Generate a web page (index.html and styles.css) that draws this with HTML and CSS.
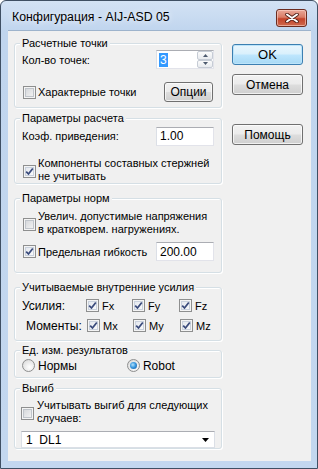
FILE: index.html
```html
<!DOCTYPE html>
<html lang="ru">
<head>
<meta charset="utf-8">
<title>Конфигурация</title>
<link rel="stylesheet" href="styles.css">
</head>
<body>
<div class="window">
  <div class="titlebar">
    <span class="title">Конфигурация - AIJ-ASD 05</span>
    <div class="close">
      <svg width="14" height="10" viewBox="0 0 14 10"><path d="M2 1.5 L12 8.5 M12 1.5 L2 8.5" stroke="#4a1c14" stroke-width="3.6" stroke-linecap="round"/><path d="M2 1.5 L12 8.5 M12 1.5 L2 8.5" stroke="#fff" stroke-width="2" stroke-linecap="round"/></svg>
    </div>
  </div>
  <div class="client">
    <div class="left">
      <div class="group g1">
        <span class="legend">Расчетные точки</span>
        <div class="row r-count">
          <span>Кол-во точек:</span>
          <div class="textbox spin"><span class="sel">3</span>
            <div class="spinbtns">
              <div class="sb"><svg width="5" height="3" viewBox="0 0 5 3"><path d="M0 3 L2.5 0 L5 3Z" fill="#4d5a6e"/></svg></div>
              <div class="sb"><svg width="5" height="3" viewBox="0 0 5 3"><path d="M0 0 L2.5 3 L5 0Z" fill="#4d5a6e"/></svg></div>
            </div>
          </div>
        </div>
        <div class="row r-char">
          <label class="check"><span class="cb"></span><span>Характерные точки</span></label>
          <div class="btn btn-opt">Опции</div>
        </div>
      </div>

      <div class="group g2">
        <span class="legend">Параметры расчета</span>
        <div class="row r-coef">
          <span>Коэф. приведения:</span>
          <div class="textbox tb-num">1.00</div>
        </div>
        <label class="check multi r-comp"><span class="cb on"><svg width="9" height="9" viewBox="0 0 9 9"><path d="M1.2 4.6 L3.5 7 L7.8 1.5" fill="none" stroke="#3a4b7c" stroke-width="1.8"/></svg></span><span>Компоненты составных стержней<br>не учитывать</span></label>
      </div>

      <div class="group g3">
        <span class="legend">Параметры норм</span>
        <label class="check multi r-inc"><span class="cb"></span><span>Увелич. допустимые напряжения<br>в кратковрем. нагружениях.</span></label>
        <div class="row r-flex">
          <label class="check"><span class="cb on"><svg width="9" height="9" viewBox="0 0 9 9"><path d="M1.2 4.6 L3.5 7 L7.8 1.5" fill="none" stroke="#3a4b7c" stroke-width="1.8"/></svg></span><span>Предельная гибкость</span></label>
          <div class="textbox tb-num">200.00</div>
        </div>
      </div>

      <div class="group g4">
        <span class="legend">Учитываемые внутренние усилия</span>
        <div class="forces">
          <span class="fl">Усилия:</span>
          <label class="check"><span class="cb on"><svg width="9" height="9" viewBox="0 0 9 9"><path d="M1.2 4.6 L3.5 7 L7.8 1.5" fill="none" stroke="#3a4b7c" stroke-width="1.8"/></svg></span><span>Fx</span></label>
          <label class="check"><span class="cb on"><svg width="9" height="9" viewBox="0 0 9 9"><path d="M1.2 4.6 L3.5 7 L7.8 1.5" fill="none" stroke="#3a4b7c" stroke-width="1.8"/></svg></span><span>Fy</span></label>
          <label class="check"><span class="cb on"><svg width="9" height="9" viewBox="0 0 9 9"><path d="M1.2 4.6 L3.5 7 L7.8 1.5" fill="none" stroke="#3a4b7c" stroke-width="1.8"/></svg></span><span>Fz</span></label>
          <span class="fl ml">Моменты:</span>
          <label class="check c2"><span class="cb on"><svg width="9" height="9" viewBox="0 0 9 9"><path d="M1.2 4.6 L3.5 7 L7.8 1.5" fill="none" stroke="#3a4b7c" stroke-width="1.8"/></svg></span><span>Mx</span></label>
          <label class="check c2"><span class="cb on"><svg width="9" height="9" viewBox="0 0 9 9"><path d="M1.2 4.6 L3.5 7 L7.8 1.5" fill="none" stroke="#3a4b7c" stroke-width="1.8"/></svg></span><span>My</span></label>
          <label class="check c2"><span class="cb on"><svg width="9" height="9" viewBox="0 0 9 9"><path d="M1.2 4.6 L3.5 7 L7.8 1.5" fill="none" stroke="#3a4b7c" stroke-width="1.8"/></svg></span><span>Mz</span></label>
        </div>
      </div>

      <div class="group g5">
        <span class="legend">Ед. изм. результатов</span>
        <div class="row r-radio">
          <label class="radio"><span class="rb"></span><span>Нормы</span></label>
          <label class="radio r-robot"><span class="rb on"><span class="dot"></span></span><span>Robot</span></label>
        </div>
      </div>

      <div class="group g6">
        <span class="legend">Выгиб</span>
        <label class="check multi r-bend"><span class="cb"></span><span>Учитывать выгиб для следующих<br>случаев:</span></label>
        <div class="combo"><span>1&nbsp;&nbsp;DL1</span><svg width="7" height="4" viewBox="0 0 7 4"><path d="M0 0 L7 0 L3.5 4Z" fill="#000"/></svg></div>
      </div>
    </div>

    <div class="right">
      <div class="btn btn-main default">OK</div>
      <div class="btn btn-main">Отмена</div>
      <div class="btn btn-main help">Помощь</div>
    </div>
  </div>
</div>
</body>
</html>
```

FILE: styles.css
```css
* { box-sizing: border-box; }
html, body { margin: 0; padding: 0; background: #fff; }
body {
  font-family: "Liberation Sans", Arial, sans-serif;
  font-size: 11px;
  color: #000;
}
.window {
  width: 318px;
  height: 469px;
  border: 1px solid #3f4f63;
  border-radius: 6px 6px 0 0;
  background: linear-gradient(180deg, #d3e2f4 0px, #c0d5ee 30px, #c3d7ef 100%);
  padding: 0 6px 7px 7px;
  display: flex;
  flex-direction: column;
}
.titlebar {
  height: 29px;
  display: flex;
  align-items: flex-start;
  justify-content: space-between;
  flex: none;
}
.title {
  font-size: 12.3px;
  margin: 9px 0 0 4px;
  line-height: 15px;
  color: #000;
  text-shadow: 0 0 6px #fff;
}
.close {
  width: 31px;
  height: 18px;
  margin: 8px 4px 0 0;
  border: 1px solid #6b2c20;
  border-radius: 3px;
  background: linear-gradient(180deg, #e9a899 0%, #d97c66 45%, #c3432a 55%, #cf6a4e 100%);
  box-shadow: inset 0 0 0 1px rgba(255,220,210,0.55);
  display: flex;
  align-items: center;
  justify-content: center;
}
.client {
  flex: 1;
  background: #f0f0f0;
  border: 1px solid #9db3cc;
  border-width: 1px 0 0 0;
  display: flex;
}
.left {
  width: 208px;
  margin-left: 6px;
  display: flex;
  flex-direction: column;
}
.right {
  margin-left: 10px;
  padding-top: 13px;
  display: flex;
  flex-direction: column;
}
.group {
  position: relative;
  border: 1px solid #d5dfe5;
  border-radius: 3px;
  box-shadow: inset 1px 1px 0 #fff, 1px 1px 0 #fff;
  padding: 0 7px 0 7px;
  display: flex;
  flex-direction: column;
  flex: none;
}
.legend {
  position: absolute;
  left: 5px;
  top: -8px;
  padding: 0 2px;
  background: #f0f0f0;
  line-height: 14px;
}
.g1 { margin-top: 12px; height: 65px; padding-top: 6px; }
.g2 { margin-top: 10px; height: 66px; padding-top: 7px; }
.g3 { margin-top: 14px; height: 75px; padding-top: 11px; }
.g4 { margin-top: 14px; height: 54px; padding-top: 11px; }
.g5 { margin-top: 9px; height: 28px; padding-top: 8px; }
.g6 { margin-top: 10px; height: 61px; padding-top: 10px; }

.row {
  display: flex;
  align-items: center;
  justify-content: space-between;
}
.r-count { height: 19px; }
.r-char { margin-top: 13px; height: 20px; }
.r-coef { height: 20px; }
.r-flex { margin-top: 7px; height: 19px; }

.textbox {
  width: 58px;
  height: 19px;
  background: #fff;
  border: 1px solid #e2e3ea;
  border-top-color: #abadb3;
  border-left-color: #dbdfe6;
  display: flex;
  align-items: center;
  padding-left: 2px;
  font-size: 12px;
}
.spin { position: relative; justify-content: space-between; padding-right: 0; }
.sel {
  background: #3399ff;
  color: #fff;
  padding: 0 1px;
  line-height: 14px;
  margin-left: 0;
}
.spinbtns {
  width: 16px;
  height: 17px;
  display: flex;
  flex-direction: column;
}
.sb {
  flex: 1;
  border: 1px solid #c6ccd5;
  border-radius: 2px;
  background: linear-gradient(180deg, #fbfbfb, #e8ebef);
  display: flex;
  align-items: center;
  justify-content: center;
}
.tb-num { padding-left: 3px; }

.check {
  display: flex;
  align-items: center;
  gap: 1px;
}
.check > span:last-child { margin-left: 1px; }
.cb {
  width: 13px;
  height: 13px;
  flex: none;
  margin-left: 1px;
  border: 1px solid #8e8f8f;
  background: linear-gradient(135deg, #cfd2d6 0%, #f4f4f4 90%);
  box-shadow: inset 0 0 0 1px #f4f4f4, inset 0 0 0 2px #bfc4ca;
  display: flex;
  align-items: center;
  justify-content: center;
}
.cb.on { background: linear-gradient(135deg, #dfe4ec 0%, #fbfbfb 90%); box-shadow: inset 0 0 0 1px #f4f4f4, inset 0 0 0 2px #c9d1dd; }
.multi { line-height: 12.5px; }
.r-comp { margin-top: 11px; }
.r-comp .cb { margin-top: 4px; }
.r-inc .cb { margin-top: 4px; }
.r-bend .cb { margin-left: -1px; margin-top: 4px; }
.r-bend > span:last-child { margin-left: 2px; }

.btn {
  border: 1px solid #707070;
  border-radius: 3px;
  background: linear-gradient(180deg, #f2f2f2 0%, #ebebeb 48%, #dddddd 52%, #cfcfcf 100%);
  box-shadow: inset 0 0 0 1px rgba(255,255,255,0.7);
  display: flex;
  align-items: center;
  justify-content: center;
  font-size: 12px;
}
.btn-opt { width: 49px; height: 20px; margin-right: 1px; }
.btn-main { width: 71px; height: 21px; margin-bottom: 9px; }
.btn-main.help { margin-top: 20px; }
.default {
  border-color: #3c7fb1;
  box-shadow: inset 0 0 0 1px #bce4fa;
  background: linear-gradient(180deg, #eaf6fd 0%, #d9f0fc 48%, #bee6fd 52%, #a7d9f5 100%);
  font-size: 13px;
}

.forces {
  display: grid;
  grid-template-columns: 64px 46px 47px auto;
  grid-auto-rows: 13px;
  row-gap: 7px;
  align-items: center;
}
.forces .cb { margin-left: 0; }
.forces .check > span:last-child { margin-left: 2px; }
.fl { font-size: 12px; }
.ml { margin-left: 4px; }
.c2 .cb { margin-left: 1px; }

.r-radio { justify-content: flex-start; height: 13px; }
.radio { display: flex; align-items: center; font-size: 12px; }
.radio > span:last-child { margin-left: 3px; }
.r-robot { margin-left: 50px; }
.rb {
  width: 13px;
  height: 13px;
  border-radius: 50%;
  border: 1px solid #8e8f8f;
  background: radial-gradient(circle at 60% 65%, #fff 0%, #e6e6e6 60%, #cfcfcf 100%);
  display: flex;
  align-items: center;
  justify-content: center;
  flex: none;
}
.dot {
  width: 7px;
  height: 7px;
  border-radius: 50%;
  background: radial-gradient(circle at 40% 40%, #b6e2fb 0%, #3c9ae0 45%, #0d4f98 100%);
}

.combo {
  margin-top: 7px;
  margin-left: -1px;
  width: 194px;
  height: 20px;
  background: #fff;
  border: 1px solid #dbdfe6;
  border-top-color: #abadb3;
  display: flex;
  align-items: center;
  justify-content: space-between;
  padding: 0 5px 0 4px;
  font-size: 12px;
}
```
